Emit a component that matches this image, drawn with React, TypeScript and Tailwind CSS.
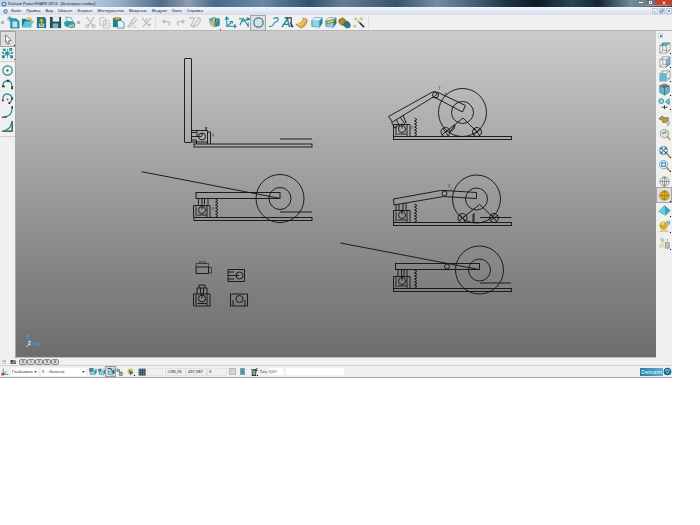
import type { ReactNode } from "react";
import clsx from "clsx";

type Tool = { name: string; art: ReactNode; active?: boolean; more?: "black" | "red"; gap?: string };

const TEAL = "#168b9c";
const DARK = "#2a3438";
const GREY = "#bdbdbd";

function Icon({ children, className = "size-[13px]" }: { children: ReactNode; className?: string }) {
  return (
    <svg viewBox="0 0 14 14" className={clsx("shrink-0", className)} fill="none" aria-hidden="true">
      {children}
    </svg>
  );
}

const cube = (
  <>
    <path d="M2 5 5 2h8v6l-3 4-8-1z" fill="#1d8da8" stroke="#205564" strokeWidth=".6" />
    <path d="M2 5 5 2h8l-3 3z" fill="#d7f4fb" />
    <path d="M2.500 5.500H10V12l-7.500-1z" fill="#8bd3ea" />
  </>
);

const fileTools: Tool[] = [
  {
    name: "New",
    art: (
      <>
        <path d="M4 3h6l3 3v7H4z" fill="#2ba2bb" stroke="#186c85" strokeWidth=".7" />
        <path d="M6 6h4l1 1v5H6z" fill="#b9eaf3" />
        <path d="M3 0v6M0 3h6M1 1l4 4M5 1 1 5" stroke="#258da4" strokeWidth=".8" />
      </>
    ),
  },
  {
    name: "Open",
    art: (
      <>
        <path d="M1 3h4l1 1h5v8H1z" fill="#137e96" />
        <path d="m4 6 10-1-4 7H1z" fill="#62c3d5" />
        <path d="M5 3q3-4 6 0l1-1v3H9l1-1Q8 2 5 3z" fill="#e8b52c" />
      </>
    ),
  },
  {
    name: "Import",
    art: (
      <>
        <path d="M2 1h8l2 2v10H2z" fill="#17798c" />
        <path d="M4 8h6v4H4z" fill="#a9cbd0" />
        <path d="M7 2 4 6h2v4h2V6h2z" fill="#e6b632" stroke="#775918" strokeWidth=".5" />
      </>
    ),
  },
  {
    name: "Save",
    art: (
      <>
        <path d="M1 1h12v12H1z" fill="#254d58" />
        <path d="M4 1h7v5H4z" fill="#e2eff1" />
        <path d="M4 8h6v5H4z" fill="#79b2bd" />
      </>
    ),
  },
  {
    name: "Print",
    art: (
      <>
        <path d="m3 1 6 1 2 5H5z" fill="#e8f6f8" stroke="#3e8797" strokeWidth=".7" />
        <path d="m1 7 3-2 7 1 2 2v4l-4 1-7-2z" fill="#2a9bb3" />
        <path d="m6 10 6-1v2l-5 1z" fill="#dbc465" />
      </>
    ),
  },
];

const editTools: Tool[] = [
  { name: "Cut", art: <path d="m3 1 6 9M11 1 5 10M5 10a1.500 1.500 0 1 0-2 2 1.500 1.500 0 0 0 2-2zM9 10a1.500 1.500 0 1 1 2 2 1.500 1.500 0 0 1-2-2z" stroke={GREY} strokeWidth="1.300" /> },
  { name: "Copy", art: <path d="M2 2h5l1 1v7H2zM6 5h5l1 1v7H6zM8 8h2M8 10h2" stroke={GREY} /> },
  {
    name: "Paste",
    art: (
      <>
        <path d="M1 2h9v10H1z" fill="#267d8d" />
        <path d="M3 1h5v3H3z" fill="#d3a632" />
        <path d="M6 5h4l3 2v6H6z" fill="#dff4f8" stroke="#2a6f80" strokeWidth=".7" />
      </>
    ),
  },
  { name: "Edit", art: <path d="M10 1 5 7l2 2 5-6M5 8l-3 3 2 1 3-2M8 12h3" stroke={GREY} strokeWidth="1.300" /> },
  { name: "Delete", art: <path d="m2 2 9 10M12 2 3 12M8 2 5 7M8 9h4" stroke={GREY} strokeWidth="1.300" /> },
];

const historyTools: Tool[] = [
  { name: "Undo", art: <path d="M3 6h6q3 1 0 4M5 4 3 6l2 2" stroke={GREY} strokeWidth="1.300" /> },
  { name: "Redo", art: <path d="M11 6H5q-3 1 0 4M9 4l2 2-2 2" stroke={GREY} strokeWidth="1.300" /> },
  { name: "Sketch", art: <path d="M1 2h6l-4 9h4M13 2 8 7l-2 5 4-2 4-6zM9 2h3" stroke={GREY} strokeWidth="1.200" /> },
];

const createTools: Tool[] = [
  {
    name: "Blank",
    more: "red",
    gap: "mr-[2px]",
    art: (
      <>
        <path d="m1 3 5-2 7 2v7l-5 2-6-3z" fill="#5aabbe" />
        <path d="m2 5 4 2v6L3 10zM5 2l3 1-1 5-2-2z" fill="#dfbd55" />
        <path d="m8 3 1 8M11 3v8" stroke="#275968" />
      </>
    ),
  },
  { name: "Workplane", art: <path d="M3 2v9h10M3 11l5-4M1 4l2-3 2 3M11 9l2 2-2 2M6 6h3v2" stroke={TEAL} strokeWidth="1.100" /> },
  { name: "Line", art: <path d="M1 3h5l5 8M2 10 5 3M4 6l8-3M9 2l4 1-3 2M11 7v5" stroke={TEAL} strokeWidth="1.100" /> },
  { name: "Arc", active: true, gap: "mr-px", art: <circle cx="7" cy="7" r="5" stroke={TEAL} strokeWidth="1.300" /> },
  { name: "Curve", art: <path d="M7 3q5-3 5 1c0 3-5 2-5 5q-1 3-5 2" stroke={TEAL} strokeWidth="1.200" /> },
  {
    name: "Annotation",
    art: (
      <>
        <path d="m1 12 6-9 2 9M4 9h5" stroke={TEAL} strokeWidth="1.500" />
        <path d="M7 2h4v10M4 2h4M10 7l3 5" stroke={DARK} strokeWidth="1.200" />
      </>
    ),
  },
  {
    name: "Surface",
    gap: "mr-px",
    art: (
      <>
        <path d="m9 2 4 2q0 7-7 9L1 9q7 0 8-7z" fill="#e2ae38" stroke="#896616" strokeWidth=".6" />
        <path d="M10 3q0 7-7 6" stroke="#f8df83" />
      </>
    ),
  },
  { name: "Solid", art: cube },
  {
    name: "Feature",
    art: (
      <>
        {cube}
        <path d="m3 6 8-3v3L4 9z" fill="#e6c14d" stroke="#66571f" strokeWidth=".6" />
      </>
    ),
  },
  {
    name: "Assembly",
    art: (
      <>
        <path d="m1 4 4-2 4 3v4l-5 1-3-3z" fill="#b28a28" stroke="#5e4a18" strokeWidth=".7" />
        <path d="m7 7 4-1 2 3v3l-4 1-3-3z" fill="#1d7e88" stroke="#1d4950" strokeWidth=".6" />
      </>
    ),
  },
  {
    name: "Wizard",
    art: (
      <>
        <path d="m8 7 5 5" stroke={DARK} strokeWidth="1.800" />
        <path d="M4 2v3M2 3h4M10 1v4M8 3h4M3 9v4M1 11h4" stroke="#d0b745" />
        <path d="M6 5h2v2H6z" fill="#4db1be" />
      </>
    ),
  },
];

const arcTools: Tool[] = [
  { name: "Full circle", art: <><circle cx="7" cy="7" r="5" stroke={TEAL} strokeWidth="1.300" /><circle cx="7" cy="7" r="1.200" fill={DARK} /></> },
  { name: "Arc through three points", art: <><path d="M2 9q0-6 5-6 5 0 5 7" stroke={TEAL} strokeWidth="1.300" /><path d="M1 8h3v2H1zM11 9h2v3h-2zM6 2h3v2H6z" fill={DARK} /></> },
  { name: "Arc by centre", art: <><path d="M2 8q0-6 5-6 5 1 5 6l-3 4" stroke={TEAL} strokeWidth="1.300" /><path d="M1 8h2v2H1zM11 6h2v2h-2zM8 11h2v2H8z" fill={DARK} /><path d="M6 7h2v2H6z" fill="#c65050" /></> },
  { name: "Fillet", art: <><path d="M12 2q0 9-8 10" stroke={TEAL} strokeWidth="1.200" /><path d="M12 0v3M1 12h5" stroke={DARK} strokeWidth="1.500" /></> },
  { name: "Corner fillet", art: <><path d="M11 3q0 7-7 8" stroke={TEAL} strokeWidth="1.200" /><path d="M12 1v11H1" stroke={DARK} strokeWidth="1.300" /></> },
];

const boxLines = <path d="M2 5h7v8H2zM2 5l3-3h8L9 5M13 2v8l-4 3M5 2v8h8M5 10l-3 3" stroke="#6d7578" strokeWidth=".6" />;

const meridians = "M12 7A5 5 0 1 1 2 7a5 5 0 0 1 10 0zM2 7h10M7 2v10M7 2Q2 7 7 12M7 2q5 5 0 10";

const viewTools: Tool[] = [
  { name: "View top", more: "black", art: <><path d="m2 5 3-3h8L9 5z" fill="#48b9d1" />{boxLines}</> },
  { name: "View right", more: "black", art: <><path d="m9 5 4-3v8l-4 3z" fill="#6cb8df" />{boxLines}</> },
  { name: "View front", more: "black", art: <>{boxLines}<path d="M2 5h7v8H2z" fill="#5cc0dc" /></> },
  { name: "Isometric", more: "black", art: <><path d="m2 3 5-2 5 2v7l-5 3-5-3z" fill="#62b9cc" stroke="#3b6c7a" strokeWidth=".8" /><path d="m2 3 5 2 5-2M7 5v8" stroke="#34758a" /><path d="m4 3 6-1-3 4z" fill="#c4403e" /></> },
  { name: "Camera", more: "black", art: <><circle cx="3.500" cy="4.500" r="2.500" fill="#a0dae0" stroke={TEAL} /><path d="M8 5l4-3v6z" fill="#a3d8e0" stroke={TEAL} /><path d="M4 11h6M7 9v4" stroke={DARK} /></> },
  { name: "Previous view", gap: "mt-[3px]", art: <><path d="m1 5 4-3v2h6v5H5V7z" fill="#c6a12f" stroke="#6d6029" strokeWidth=".8" /><path d="m8 6 5 4-2 1v2z" fill="#eee" stroke="#777" strokeWidth=".6" /></> },
  { name: "Refresh view", art: <><circle cx="7" cy="6" r="4.500" fill="#d6e9ee" stroke="#7ba2b5" /><path d="m10 9 3 4" stroke="#d2993f" strokeWidth="1.800" /><path d="m4 5 5-2v4L7 5 5 7z" fill="#b89722" /></> },
  { name: "Zoom full", more: "black", gap: "mt-[3px]", art: <><circle cx="6" cy="6" r="4.500" fill="#c9e2ed" stroke="#79a8ba" /><path d="m9 9 4 4" stroke="#be8849" strokeWidth="1.800" /><path d="m3 3 6 6M9 3 3 9M3 5V3h2M7 3h2v2M3 7v2h2M7 9h2V7" stroke="#25677f" /></> },
  { name: "Zoom box", more: "black", art: <><circle cx="6" cy="6" r="4.500" fill="#e0f1f9" stroke="#79a8cc" /><path d="m9 9 4 4" stroke="#be8849" strokeWidth="1.800" /><path d="M4 4h4v4H4z" stroke="#27749c" /></> },
  { name: "Wireframe", gap: "mt-[2px]", art: <path d={meridians} stroke="#6a7074" strokeWidth=".7" /> },
  { name: "Shaded wireframe", active: true, more: "black", art: <><circle cx="7" cy="7" r="5.500" fill="#e3b42b" /><path d={meridians} stroke="#8a6a14" strokeWidth=".6" /></> },
  { name: "Shaded", more: "black", gap: "mt-px", art: <><path d="m1 8 6-6 6 5-5 5z" fill="#37aac4" stroke="#17718a" strokeWidth=".7" /><path d="m7 2 1 10-7-4z" fill="#64d0e4" /></> },
  { name: "Material", more: "black", gap: "mt-[2px]", art: <><circle cx="6" cy="6" r="4.500" fill="#d9a927" /><circle cx="11" cy="3" r="2.500" fill="#7cc0c3" /><path d="M2 11h9v2H2z" fill="#ddc889" /><circle cx="5" cy="4" r="1.500" fill="#f4df89" /></> },
  { name: "Compare", more: "black", gap: "mt-[3px]", art: <><path d="m2 2 4-1 1 4-3 1zM8 3l3-1v3z" fill="#a9ceb1" /><path d="m1 8 5-2 1 4-5 3z" fill="#e5d99b" /><path d="M8 6h4v6H8z" fill="#b9c9cb" stroke="#879496" /></> },
];

function ToolButton({ tool }: { tool: Tool }) {
  return (
    <button
      type="button"
      aria-label={tool.name}
      aria-pressed={tool.active}
      className={clsx(
        "relative flex size-[14px] shrink-0 items-center justify-center",
        tool.active && "bg-[#dedede] outline outline-[#a4a4a4]",
        tool.gap,
      )}
    >
      <Icon>{tool.art}</Icon>
      {tool.more && (
        <span className={clsx("absolute right-0 bottom-0 size-px", tool.more === "red" ? "bg-red-600" : "bg-black")} />
      )}
    </button>
  );
}

function ToolGroup({ tools, className }: { tools: Tool[]; className?: string }) {
  return (
    <div className={clsx("flex items-center", className)}>
      {tools.map((tool) => (
        <ToolButton key={tool.name} tool={tool} />
      ))}
    </div>
  );
}

function Grip() {
  return <span className="size-[3px] shrink-0 rounded-full border border-[#777]" />;
}

const menus = ["Файл", "Правка", "Вид", "Объект", "Формат", "Инструменты", "Макросы", "Модули", "Окно", "Справка"];

function TitleBar() {
  return (
    <header className="flex h-[7px] items-center overflow-hidden bg-[linear-gradient(90deg,#c5d6ea_0%,#bccfe3_13%,#93abc3_18%,#4d6d8c_24%,#8f9daf_28%,#45698d_32%,#6b89a4_39%,#2e536e_46%,#657e96_51%,#35556e_59%,#758da4_65%,#415d75_71%,#1c303e_76%,#0c1a25_80%,#294655_85%,#152734_89%,#728da0_94%,#253847_100%)] pl-px">
      <Icon className="size-[6px]">
        <circle cx="7" cy="7" r="6" fill="#6181aa" />
        <path d="M3 9 7 3l4 6z" fill="#e5edf8" />
      </Icon>
      <h1 className="ml-px text-[4px] leading-[6px] font-medium whitespace-nowrap text-black">
        Delcam PowerSHAPE 2013 - [болгарка-стойка]
      </h1>
      <div className="ml-auto flex h-[6px] self-start">
        <button type="button" aria-label="Minimize" className="flex w-[10px] items-center justify-center rounded-bl-xs border border-t-0 border-[#798792] bg-[#77818a]">
          <span className="h-px w-[4px] bg-white" />
        </button>
        <button type="button" aria-label="Restore" className="flex w-[9px] items-center justify-center border-b border-[#98a3ad] bg-[#69747e]">
          <span className="size-[3px] border border-[#eee]" />
        </button>
        <button type="button" aria-label="Close" className="flex w-[17px] items-center justify-center rounded-br-xs border-b border-[#c78476] bg-[#c43f2d]">
          <Icon className="size-[4px]">
            <path d="m2 2 10 10M12 2 2 12" stroke="white" strokeWidth="3" />
          </Icon>
        </button>
      </div>
    </header>
  );
}

function MenuBar() {
  return (
    <nav className="flex h-2 items-center bg-gradient-to-b from-[#f6f8fd] to-[#d6dced] pl-[3px]">
      <Icon className="size-[5px]">
        <circle cx="7" cy="7" r="6" fill="#5278ad" />
        <path d="M3 9 7 3l4 6z" fill="#e5edf8" />
      </Icon>
      <div className="ml-[3px] flex gap-[5px] text-[4px] leading-[6px] font-medium text-black">
        {menus.map((menu) => (
          <button type="button" key={menu}>
            {menu}
          </button>
        ))}
      </div>
      <div className="ml-auto flex gap-px">
        {["M3 10h6", "M2 6h6v6H2zM5 3h7v6", "m3 3 8 8M11 3l-8 8"].map((d, i) => (
          <button
            type="button"
            key={d}
            aria-label={["Minimize document", "Restore document", "Close document"][i]}
            className="flex size-[6px] items-center justify-center border border-[#b9cbdc] bg-[#eaf1f9]"
          >
            <Icon className="size-[4px]">
              <path d={d} stroke="#41566a" strokeWidth="2" />
            </Icon>
          </button>
        ))}
      </div>
    </nav>
  );
}

function Toolbar() {
  return (
    <div className="flex h-4 items-center border-b border-[#b7b7b7] bg-[#f0f0f0] pl-px">
      <Grip />
      <ToolGroup tools={fileTools} className="ml-[2px]" />
      <span className="ml-px flex">
        <Grip />
      </span>
      <ToolGroup tools={editTools} className="ml-[3px]" />
      <span className="ml-[2px] h-3 w-px bg-[#dadada]" />
      <ToolGroup tools={historyTools} className="ml-[3px]" />
      <ToolGroup tools={createTools} className="ml-[6px]" />
      <span className="ml-[3px] h-[14px] w-px bg-[#dedede]" />
    </div>
  );
}

function LeftTools() {
  return (
    <aside className="flex w-4 shrink-0 flex-col items-center border-r border-[#a9a9a9] bg-[#f0f0f0] pt-px">
      <ToolButton
        tool={{
          name: "Select",
          active: true,
          more: "black",
          art: <path d="m5 2 6 6-3 .5 1 3-2 .5-1-3-1 1z" fill="white" stroke="#4d4d4d" strokeWidth=".8" />,
        }}
      />
      <ToolButton
        tool={{
          name: "Quick select",
          more: "red",
          art: (
            <>
              <path d="M7 2v10M2 7h10M4 4l6 6M10 4l-6 6" stroke="#4fa7b1" />
              <path d="M5 5h3v4H5zM2 2h3v2H2zM9 1h3v3H9zM1 9h3v3H1zM10 9h3v3h-3zM1 5h2v2H1zM11 5h2v2h-2z" fill="#258e9b" />
            </>
          ),
        }}
      />
      <div className="mt-px flex w-full flex-col items-center border-y border-[#d1d1d1] pt-px pb-[3px]">
        {arcTools.map((tool) => (
          <ToolButton key={tool.name} tool={tool} />
        ))}
      </div>
    </aside>
  );
}

function ViewTools() {
  return (
    <aside className="flex w-4 shrink-0 flex-col items-center bg-[#f0f0f0] pt-[2px]">
      <button type="button" aria-label="View toolbar" className="mr-[7px] mb-[2px] flex size-[5px] shrink-0 items-center justify-center border border-[#bdd2df] bg-white">
        <span className="size-[2px] bg-[#5881a0]" />
      </button>
      {viewTools.map((tool) => (
        <ToolButton key={tool.name} tool={tool} />
      ))}
    </aside>
  );
}

function Wheel({ x, y }: { x: number; y: number }) {
  return (
    <>
      <circle cx={x} cy={y} r="24" />
      <circle cx={x} cy={y} r="11" />
    </>
  );
}

function Roller({ x, y }: { x: number; y: number }) {
  return (
    <>
      <circle cx={x} cy={y} r="4.500" />
      <path d={`M${x - 4} ${y + 3}l8-6M${x - 3} ${y - 4}l6 8`} />
    </>
  );
}

// Bearing block; y is the top of the base plate it stands on.
function Bearing({ x, y }: { x: number; y: number }) {
  return (
    <g transform={`translate(${x} ${y})`}>
      <path d="M0 0v-12h16.500V0M2.500-1v-10M13.500 0v-12M4-2.500h9M8.500-8v-5" />
      <circle cx="8.500" cy="-7.500" r="3.500" />
    </g>
  );
}

function Spring({ x, top, bottom }: { x: number; top: number; bottom: number }) {
  const points: string[] = [];
  for (let y = top, i = 0; y <= bottom; y += 1.5, i++) points.push(`${x + (i % 2 ? 2 : -0.5)},${y}`);
  return <polyline points={points.join(" ")} />;
}

function Base({ x, y }: { x: number; y: number }) {
  return <rect x={x} y={y} width="118" height="3" />;
}

function Drawing() {
  return (
    <svg viewBox="16 31 640 326" className="block w-full" fill="none" stroke="#101010" strokeWidth=".9" role="img" aria-label="болгарка-стойка">
      <rect x="184.500" y="58.500" width="7" height="84" rx=".5" />
      <Base x={194} y={144} />
      <path d="M280 139h32M191.500 130.500h16v13.500M191.500 132.500h5M191.500 136.500h10M191.500 140h5v4M191.500 142h16M208 132h2.500v12M197 131v5M202 136v-3M206 131v-4" />
      <circle cx="202" cy="136.500" r="3.500" />

      <path d="M141.500 171.700 279.500 198.300M280 212h32" />
      <rect x="196" y="192.500" width="84" height="6" />
      <Wheel x={280} y={198.5} />
      <Base x={194} y={217.5} />
      <Bearing x={193.5} y={217.5} />
      <path d="M198.500 198.500v6M202 198.500v6M204.500 198.500v6M208 198.500v6" />
      <Spring x={216} top={199} bottom={217} />

      <Wheel x={462.5} y={112.5} />
      <path d="m388.500 116.500 44-24.500q5-1 4 3l-44 27zM437 92l28.500 13.500-3 6.500L434 97M391.500 122l3 6M396 119l3 6M400 117l5 7M403 115l3 8M394 128l6-3" />
      <circle cx="435.500" cy="95" r="3" />
      <Base x={393.5} y={136.5} />
      <Bearing x={393.5} y={136.5} />
      <Spring x={415} top={118} bottom={136} />
      <Roller x={445.5} y={132} />
      <Roller x={477} y={132} />
      <path d="m445.500 132 17.500-14 14 14M449 133l6-8-1 4-4 3" />

      <Wheel x={476.5} y={199} />
      <path d="m393.500 199 47-8.500h4l32 2v6l-33-2-49.500 8.500zM396 205v5M399 204v6M403 203v7M406 203v7" />
      <circle cx="444.500" cy="193.500" r="2.500" />
      <Base x={393.5} y={222.5} />
      <Bearing x={393.5} y={222.5} />
      <Spring x={415} top={204} bottom={222} />
      <Roller x={462.5} y={218} />
      <Roller x={494} y={218} />
      <path d="m462.500 218 17-13.500 14.500 13.500M480 217.500h31.500M474 213v9M473 214v8" />

      <path d="M340.500 243 479 269.500M480 283h31" />
      <rect x="395.500" y="263.500" width="84" height="6" />
      <circle cx="447" cy="266.500" r="2.500" />
      <Wheel x={479.5} y={270} />
      <Base x={393.5} y={288.5} />
      <Bearing x={393.5} y={288.5} />
      <path d="M398 269.500v7M401.500 269.500v7M404 269.500v7M407 269.500v7" />
      <Spring x={415} top={270} bottom={288} />

      <path d="M196 267h12.500v6.500H196z" />
      <path d="M196 267v-3.500h12.500v3.500M208.500 267.500h3v5.500h-3M199.500 263v-1h6v1" strokeWidth=".6" />
      <path d="M228 269.500h16.500v12H228zM228 272h6M228 275.500h11M228 279h6" />
      <circle cx="239.500" cy="275.500" r="3.500" />
      <Bearing x={193.5} y={306} />
      <path d="M194 306h16.500M197 294v-6h10v6M199 288v-3h6v3M200.500 288v6M203.500 288v6" />
      <path d="M230.500 294h17v12h-17zM233 306v-6M245 306v-6" />
      <circle cx="239.500" cy="299" r="3.500" />

      <g stroke="#343434" strokeWidth=".4">
        <path d="m205.500 127 1 1.500 1-1.500M206.500 128.500v2M212 133.500l2 3M214 133.500l-2 3" />
        <path d="m438.500 86 1 1.500 1-1.500M439.500 87.500v2M444.500 92.500l2 3M446.500 92.500l-2 3M405 120l2 3M411 126l2 3M413 126l-2 3" />
        <path d="m448 184 1 1.500 1-1.500M449 185.500v2M445 191h6v-4M212 207l2 3M214 207l-2 3" />
      </g>
      <g stroke="#3b9be0">
        <path d="M28 344v-10m-1.500 3 1.500-3 1.500 3M31 344h9m-3-1.500 3 1.500-3 1.500" />
        <path d="M28.500 341.500h2l-2 3h2M26.500 347l2-2" stroke="#e8f2f6" />
      </g>
    </svg>
  );
}

function LevelBar() {
  return (
    <div className="flex h-2 items-center border-b border-[#d3d3d3] bg-[#f0f0f0] pl-[2px]">
      <button type="button" aria-label="Levels" className="flex size-1 items-center justify-center border border-[#b6d0dd]">
        <span className="size-px bg-[#5881a0]" />
      </button>
      <button type="button" aria-label="Open levels" className="ml-1 flex">
        <Icon className="size-[7px]">
          <path d="M1 4h5l1 1h5v7H1z" fill="#3b4447" />
          <path d="m4 7 9-1-2 5H2z" fill="#87908f" />
        </Icon>
      </button>
      <div className="ml-[2px] flex">
        {["0", "1", "2", "3", "4"].map((level) => (
          <button type="button" key={level} className="flex h-[6px] w-2 items-center justify-center rounded-[2px] border border-[#8c8c8c] bg-[#dcdcdc] text-[4px] leading-none">
            {level}
          </button>
        ))}
      </div>
    </div>
  );
}

function Dropdown({ label, value, className }: { label: string; value: string; className: string }) {
  return (
    <label className={clsx("relative flex h-[8px] items-center bg-white", className)}>
      <select aria-label={label} className="w-full appearance-none pl-px text-[4px] leading-[8px]">
        <option>{value}</option>
      </select>
      <svg viewBox="0 0 4 2" className="pointer-events-none absolute right-px h-[2px] w-[3px]" aria-hidden="true">
        <path d="M0 0h4L2 2z" fill="#222" />
      </svg>
    </label>
  );
}

function ValueBox({ label, value, className }: { label: string; value: string; className: string }) {
  return (
    <input
      aria-label={label}
      defaultValue={value}
      className={clsx("h-[8px] border border-[#e2e2e2] p-0 text-[4px] leading-[6px]", className)}
    />
  );
}

const statusTools: Tool[] = [
  { name: "Cut plane", art: <>{cube}<path d="M1 1h6v4H1z" fill="#5a9aa6" stroke={DARK} /></> },
  { name: "Layer solid", art: <>{cube}<path d="M1 2h4v3H1z" fill="#7c9da3" stroke={DARK} /></> },
  { name: "Snap solid", active: true, art: <>{cube}<path d="M1 1h6l5 9" stroke={DARK} strokeWidth="1.500" /></> },
  { name: "Lock selection", art: <><path d="M2 1v5h4V3H2" stroke="#42666c" strokeWidth="1.500" /><path d="M6 7h5v6H6z" fill="#9ca9a9" stroke="#4f5d60" /></> },
];

function StatusBar() {
  return (
    <footer className="flex h-3 items-center border-b border-[#aaaaaa] bg-[#f0f0f0]">
      <Icon className="ml-px size-2">
        <path d="M4 1v10h9M4 11l6-6" stroke={TEAL} strokeWidth="1.500" />
        <circle cx="3" cy="11" r="2.500" fill="#c33b48" />
      </Icon>
      <Dropdown label="Workspace" value="Глобально" className="ml-[2px] w-[27px]" />
      <Dropdown label="Level" value={"0\u00a0\u00a0\u00a0: General"} className="ml-[3px] w-[45px]" />
      <div className="ml-[2px] flex">
        {statusTools.map((tool) => (
          <button
            type="button"
            key={tool.name}
            aria-label={tool.name}
            className={clsx("flex size-[9px] items-center justify-center", tool.active && "bg-[#dadada] outline outline-[#9b9b9b]")}
          >
            <Icon className="size-2">{tool.art}</Icon>
          </button>
        ))}
      </div>
      <button type="button" aria-label="Cursor style" className="relative ml-[3px] flex">
        <Icon className="size-2">
          <circle cx="6" cy="6" r="5" fill="#d2c568" />
          <path d="m3 3 9 6-4 1-2 3z" fill="#436a6d" />
        </Icon>
        <span className="absolute right-0 bottom-0 size-px bg-black" />
      </button>
      <button type="button" aria-label="Grid" className="ml-[3px] flex">
        <Icon className="size-2">
          <path d="M1 1h12v12H1z" fill="#6ea4b8" />
          <path d="M1 4h12M1 8h12M1 12h12M4 1v12M8 1v12M12 1v12" stroke="#273f4a" strokeWidth="1.500" />
        </Icon>
      </button>
      <ValueBox label="Grid size" value="" className="ml-px w-4" />
      <ValueBox label="X" value="1285,05" className="ml-[2px] w-[21px] pl-px" />
      <ValueBox label="Y" value="497,087" className="w-[21px] pl-px" />
      <ValueBox label="Z" value="0" className="w-[20px] pl-px" />
      <button type="button" aria-label="Lock coordinates" className="ml-[2px] size-[7px] border border-[#b9b9b9] bg-[#d2d2d2]" />
      <button type="button" aria-label="Calculator" className="ml-[3px] flex">
        <Icon className="size-[7px]">
          <path d="M3 1h8v12H3z" fill="#63a7b5" stroke="#427280" />
          <path d="M5 4h4M5 7h4M5 10h4" stroke="#28586a" />
        </Icon>
      </button>
      <button type="button" aria-label="Tolerance settings" className="relative ml-[4px] flex">
        <Icon className="size-2">
          <path d="M2 3h8v10H4V5M6 5l7-4M9 6l4-2" stroke={DARK} strokeWidth="1.800" />
          <path d="M5 5h4v7H5z" fill="#8ca0a2" />
        </Icon>
        <span className="absolute right-0 bottom-0 size-px bg-black" />
      </button>
      <label className="ml-[2px] flex items-center text-[4px] leading-[8px]">
        Точ
        <input defaultValue="0,01" className="ml-[2px] h-[7px] w-[14px] bg-white p-0 text-[4px] leading-[7px]" />
      </label>
      <input aria-label="Command" className="ml-[3px] h-[7px] w-[58px] bg-white" />
      <div className="ml-auto flex items-center">
        <a href="#delcam" className="flex h-[8px] w-[23px] items-center justify-center bg-gradient-to-r from-[#277dab] to-[#5eb0d4] text-[6px] leading-none text-white">
          Delcam
        </a>
        <button type="button" aria-label="Help" className="flex">
          <Icon className="size-[9px]">
            <circle cx="7" cy="7" r="6" fill="#176b90" />
            <path d="M3 4h8L9 8l-2 3-2-3z" fill="#87cce2" />
            <path d="M5 6h4L7 9z" fill="#153f58" />
          </Icon>
        </button>
      </div>
    </footer>
  );
}

export default function App() {
  return (
    <div className="min-h-screen bg-white">
      <div className="w-[96%] font-['Open_Sans','Noto_Sans',sans-serif] text-black">
        <TitleBar />
        <MenuBar />
        <Toolbar />
        <div className="flex">
          <LeftTools />
          <main className="min-w-0 flex-1 border-b border-[#bcbcbc] bg-gradient-to-b from-[#cacaca] to-[#6d6d6d]">
            <Drawing />
          </main>
          <ViewTools />
        </div>
        <LevelBar />
        <StatusBar />
      </div>
    </div>
  );
}
